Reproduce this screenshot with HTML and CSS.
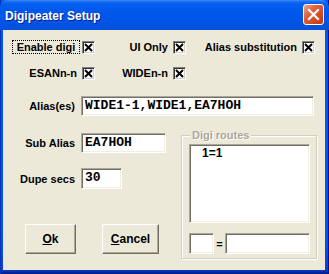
FILE: index.html
```
<!DOCTYPE html>
<html>
<head>
<meta charset="utf-8">
<link rel="stylesheet" href="styles.css">
</head>
<body>
<div class="window">
  <div class="titlebar">
    <span class="title">Digipeater Setup</span>
    <span class="close"><svg width="19" height="19" viewBox="0 0 19 19"><path d="M5 5 L14 14 M14 5 L5 14" stroke="#fff" stroke-width="2.2" stroke-linecap="square"/></svg></span>
  </div>
  <div class="client">
    <div class="cbrow">
      <label class="cblabel first"><span class="focus">Enable digi</span></label>
      <span class="cb"><svg width="9" height="9" viewBox="0 0 9 9"><path d="M1 1 L8 8 M8 1 L1 8" stroke="#000" stroke-width="2"/></svg></span>
      <label class="cblabel">UI Only</label>
      <span class="cb"><svg width="9" height="9" viewBox="0 0 9 9"><path d="M1 1 L8 8 M8 1 L1 8" stroke="#000" stroke-width="2"/></svg></span>
      <label class="cblabel">Alias substitution</label>
      <span class="cb"><svg width="9" height="9" viewBox="0 0 9 9"><path d="M1 1 L8 8 M8 1 L1 8" stroke="#000" stroke-width="2"/></svg></span>
    </div>
    <div class="cbrow row2">
      <label class="cblabel">ESANn-n</label>
      <span class="cb"><svg width="9" height="9" viewBox="0 0 9 9"><path d="M1 1 L8 8 M8 1 L1 8" stroke="#000" stroke-width="2"/></svg></span>
      <label class="cblabel">WIDEn-n</label>
      <span class="cb"><svg width="9" height="9" viewBox="0 0 9 9"><path d="M1 1 L8 8 M8 1 L1 8" stroke="#000" stroke-width="2"/></svg></span>
    </div>
    <div class="field alias">
      <label>Alias(es)</label>
      <div class="edit wide">WIDE1-1,WIDE1,EA7HOH</div>
    </div>
    <div class="lower">
      <div class="leftcol">
        <div class="field sub">
          <label>Sub Alias</label>
          <div class="edit subin">EA7HOH</div>
        </div>
        <div class="field dupe">
          <label>Dupe secs</label>
          <div class="edit dupein">30</div>
        </div>
        <div class="buttons">
          <button class="btn ok"><u>O</u>k</button>
          <button class="btn cancel"><u>C</u>ancel</button>
        </div>
      </div>
      <div class="group">
        <span class="legend">Digi routes</span>
        <div class="list">1=1</div>
        <div class="routerow">
          <div class="edit small"></div>
          <span class="eq">=</span>
          <div class="edit large"></div>
        </div>
      </div>
    </div>
  </div>
</div>
</body>
</html>
```
FILE: styles.css
```
* { box-sizing: border-box; }
html, body { margin: 0; padding: 0; }
body {
  font: bold 11px "Liberation Sans", Arial, sans-serif;
  color: #000;
  background: #fff;
}
.window {
  width: 329px;
  height: 274px;
  display: flex;
  flex-direction: column;
  background: linear-gradient(to bottom, #0058EE 0, #0055E5 240px, #0A40CC 270px, #002AA0 272px, #001A8C 274px);
  box-shadow: inset 1px 0 0 #0832B8, inset -1px 0 0 #00138C;
}
.titlebar {
  height: 30px;
  display: flex;
  align-items: flex-start;
  justify-content: space-between;
  padding: 0 5px 0 5px;
  background: linear-gradient(to bottom, #3D8EF7 0, #1569F2 2px, #0461F0 4px, #0058EE 10px, #0056E8 20px, #0153E0 26px, #0A4FD8 30px);
  border-radius: 7px 7px 0 0;
}
.title {
  margin-top: 9px;
  font: bold 12px/15px "Liberation Sans", Arial, sans-serif;
  color: #fff;
  text-shadow: 1px 1px 0 #0A1E8A;
}
.close {
  margin-top: 4px;
  width: 21px;
  height: 21px;
  border: 1px solid #fff;
  border-radius: 3px;
  background: linear-gradient(135deg, #F0A58A 0, #E2623F 35%, #D4471F 70%, #C0380F 100%);
  display: flex;
  align-items: center;
  justify-content: center;
}
.close svg { display: block; }
.client {
  flex: 1;
  margin: 0 4px 4px 3px;
  background: #ECE9D8;
  padding-top: 10px;
}
.cbrow {
  display: grid;
  grid-template-columns: 79px 13px 78px 13px 116px 13px;
  height: 13px;
  align-items: center;
}
.row2 { margin-top: 14px; }
.cblabel {
  text-align: right;
  padding-right: 5px;
  line-height: 13px;
  white-space: nowrap;
}
.cblabel.first {
  padding-left: 9px;
  padding-right: 2px;
}
.focus {
  display: block;
  height: 14px;
  line-height: 12px;
  border: 1px dotted #000;
  text-align: center;
}
.cb {
  width: 13px;
  height: 13px;
  background: #fff;
  border: 1px solid;
  border-color: #808080 #fff #fff #808080;
  box-shadow: inset 1px 1px 0 #303030, inset -1px -1px 0 #D4D0C8;
  display: flex;
  align-items: center;
  justify-content: center;
}
.cb svg { display: block; }
.field {
  display: grid;
  grid-template-columns: 78px auto;
  align-items: center;
  height: 20px;
}
.field label {
  text-align: right;
  padding-right: 6px;
  white-space: nowrap;
}
.alias { margin-top: 16px; }
.edit {
  height: 20px;
  background: #fff;
  border: 1px solid;
  border-color: #ACA899 #fff #fff #ACA899;
  box-shadow: inset 1px 1px 0 #716F64, inset -1px -1px 0 #F1EFE2;
  font: bold 13px/18px "Liberation Mono", "Courier New", monospace;
  padding-left: 3px;
  white-space: nowrap;
}
.wide { width: 233px; }
.lower {
  display: flex;
  margin-top: 13px;
}
.leftcol { width: 178px; }
.sub { margin-top: 4px; }
.subin { width: 85px; }
.dupe { margin-top: 15px; height: 21px; }
.dupein { width: 41px; height: 21px; }
.buttons {
  display: flex;
  margin-top: 35px;
  padding-left: 22px;
  gap: 26px;
}
.btn {
  height: 30px;
  background: #ECE9D8;
  border: 1px solid;
  border-color: #fff #716F64 #716F64 #fff;
  box-shadow: inset -1px -1px 0 #ACA899;
  font: bold 12px "Liberation Sans", Arial, sans-serif;
  color: #000;
  padding: 0;
}
.ok { width: 51px; }
.cancel { width: 57px; }
.group {
  position: relative;
  margin-top: 6px;
  width: 136px;
  height: 124px;
  border: 1px solid #D0D0BF;
  box-shadow: inset 1px 1px 0 #fff, 1px 1px 0 #fff;
  padding: 8px 0 0 7px;
}
.legend {
  position: absolute;
  top: -7px;
  left: 8px;
  padding: 0 2px;
  background: #ECE9D8;
  color: #ACA899;
  text-shadow: 1px 1px 0 #fff;
  line-height: 13px;
}
.list {
  width: 121px;
  height: 79px;
  background: #fff;
  border: 1px solid;
  border-color: #ACA899 #fff #fff #ACA899;
  box-shadow: inset 1px 1px 0 #716F64, inset -1px -1px 0 #F1EFE2;
  font: bold 12px/14px "Liberation Sans", Arial, sans-serif;
  padding: 1px 0 0 12px;
}
.routerow {
  display: flex;
  align-items: center;
  margin-top: 10px;
}
.small { width: 25px; height: 21px; }
.eq { width: 11px; text-align: center; }
.large { width: 85px; height: 21px; }
```
